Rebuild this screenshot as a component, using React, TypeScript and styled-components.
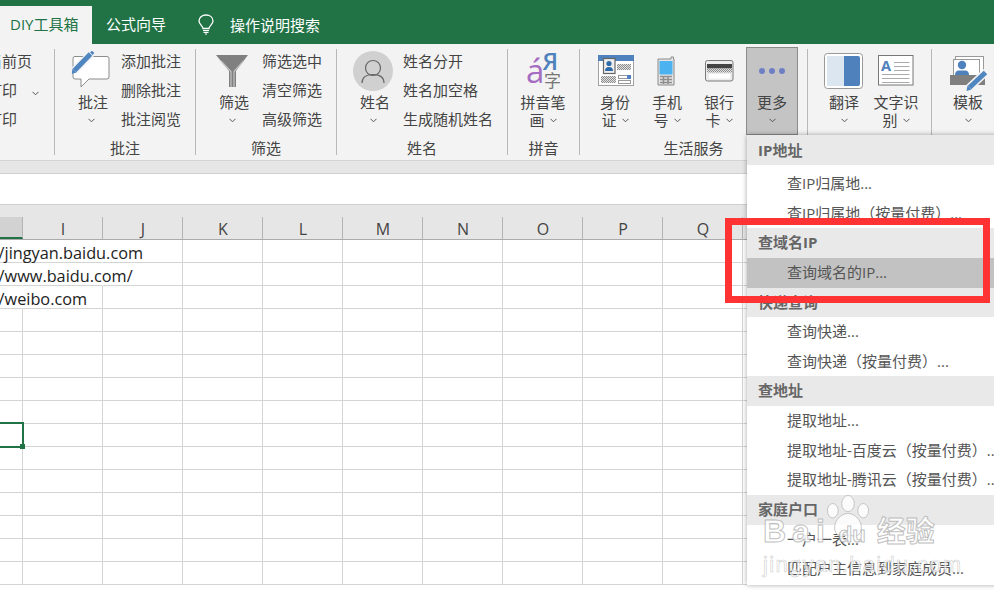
import { ReactNode } from "react";
import styled, { createGlobalStyle } from "styled-components";

const FONT = `"Open Sans", "Noto Sans CJK SC", sans-serif`;
const GREEN = "#217346";
const COLUMNS = ["H", "I", "J", "K", "L", "M", "N", "O", "P", "Q", "R", "S", "T"];
const URLS = ["https://jingyan.baidu.com", "https://www.baidu.com/", "https://weibo.com"];
const ROWS = Array.from({ length: 15 }, (_, i) => i);

const MENU = [
  { title: "IP地址", first: true, items: ["查IP归属地...", "查IP归属地（按量付费）..."] },
  { title: "查域名IP", items: ["查询域名的IP..."] },
  { title: "快递查询", items: ["查询快递...", "查询快递（按量付费）..."] },
  { title: "查地址", items: ["提取地址...", "提取地址-百度云（按量付费）...", "提取地址-腾讯云（按量付费）..."] },
  { title: "家庭户口", items: ["一户一表...", "匹配户主信息到家庭成员..."] },
];

const Chevron = () => (
  <ChevronIcon width="7" height="5" viewBox="0 0 7 5">
    <path d="M0.5 0.8 L3.5 3.8 L6.5 0.8" fill="none" stroke="#555" strokeWidth="1" />
  </ChevronIcon>
);

// speckled grey used for the fake print on the card icons
const Speckle = ({ id }: { id: string }) => (
  <defs>
    <pattern id={id} width="2" height="2" patternUnits="userSpaceOnUse">
      <rect width="2" height="2" fill="#e2e2e2" />
      <rect width="1" height="1" fill="#8c8c8c" />
      <rect x="1" y="1" width="1" height="1" fill="#8c8c8c" />
    </pattern>
  </defs>
);

const CommentIcon = () => (
  <svg width="40" height="40" viewBox="0 0 40 40">
    <path d="M4 5.5 H36 Q38 5.5 38 7.5 V26 Q38 28 36 28 H18 L10 36 V28 H4 Q2 28 2 26 V7.5 Q2 5.5 4 5.5 Z" fill="#fff" stroke="#8c8c8c" strokeWidth="1" />
    <path d="M3 20 L20 3" stroke="#f3f3f3" strokeWidth="8" />
    <path d="M3.5 19.5 L19.5 3" stroke="#4f86c0" strokeWidth="5" />
    <path d="M0.8 23 L1.5 17.5 L5.5 21.5 Z" fill="#4f86c0" />
    <path d="M20 0.5 L22.5 3" stroke="#4f86c0" strokeWidth="2.5" />
  </svg>
);

const FunnelIcon = () => (
  <svg width="40" height="40" viewBox="0 0 40 40">
    <path d="M4 4 H36 L24 20 V36 H17 V20 Z" fill="#808080" />
    <path d="M9 10 L19 20.5 V36 M31.5 10 L22 20.5 V36" fill="none" stroke="#c4c4c4" strokeWidth="1.2" />
  </svg>
);

const AvatarIcon = () => (
  <svg width="40" height="40" viewBox="0 0 40 40">
    <circle cx="20" cy="20" r="20" fill="#d0d0d0" />
    <circle cx="20" cy="17" r="7.5" fill="none" stroke="#666" strokeWidth="1.2" />
    <path d="M9 32 C9 26 14 23.5 20 23.5 S31 26 31 32" fill="none" stroke="#666" strokeWidth="1.2" />
  </svg>
);

const PinyinIcon = () => (
  <svg width="40" height="40" viewBox="0 0 40 40">
    <text x="3" y="32" fontSize="33" fill="#a56dc2" fontFamily="Open Sans, sans-serif">á</text>
    <text x="19.5" y="19" fontSize="24" fontWeight="600" fill="#4f81bd" fontFamily="Open Sans, sans-serif">Я</text>
    <text x="21" y="36" fontSize="17" fill="#777" fontFamily="Noto Sans CJK SC, sans-serif">字</text>
  </svg>
);

const IdCardIcon = () => (
  <svg width="40" height="40" viewBox="0 0 40 40">
    <Speckle id="id-speckle" />
    <rect x="3.5" y="4.5" width="35" height="30" fill="#fff" stroke="#a0a0a0" />
    <rect x="3" y="4" width="36" height="6" fill="#4f81bd" />
    <rect x="8.5" y="7.5" width="11.5" height="15" fill="#eee" stroke="#666" strokeWidth="1.2" />
    <circle cx="14" cy="12.5" r="2.6" fill="#2f6aa8" />
    <path d="M10 20 Q10 16 14 16 T18 20 Z" fill="#2f6aa8" />
    <rect x="22" y="13" width="14" height="6" fill="url(#id-speckle)" />
    <rect x="6" y="25" width="15" height="7" fill="url(#id-speckle)" />
    <rect x="23.5" y="24.5" width="12" height="3" fill="#fff" stroke="#999" />
    <rect x="32" y="24" width="4" height="4" fill="#4f81bd" />
    <rect x="23.5" y="29.5" width="12" height="3" fill="#fff" stroke="#999" />
  </svg>
);

const PhoneIcon = () => (
  <svg width="40" height="40" viewBox="0 0 40 40">
    <path d="M24 6 H26.5 V8 H27 V34 H11 V8 H24 Z" fill="#e4e4e4" stroke="#8a8a8a" />
    <rect x="12.5" y="10" width="13" height="13.5" fill="#4db3f0" />
    <path d="M13 25.5 H25 M13 28.5 H25 M13 31.5 H25 M16.5 25 V33 M21 25 V33" stroke="#8f8f8f" strokeWidth="1.6" />
  </svg>
);

const BankCardIcon = () => (
  <svg width="40" height="40" viewBox="0 0 40 40">
    <Speckle id="card-speckle" />
    <rect x="6.5" y="9.5" width="27.5" height="20.5" rx="2" fill="#ececec" stroke="#7a7a7a" />
    <rect x="8" y="13" width="25" height="4.5" fill="#444" />
    <rect x="8" y="17.5" width="25" height="4" fill="url(#card-speckle)" />
    <rect x="10" y="23" width="21" height="4.5" fill="#fff" />
  </svg>
);

const DotsIcon = () => (
  <svg width="40" height="40" viewBox="0 0 40 40">
    <circle cx="10" cy="20" r="3" fill="#6f7fc4" />
    <circle cx="20" cy="20" r="3" fill="#6f7fc4" />
    <circle cx="30" cy="20" r="3" fill="#6f7fc4" />
  </svg>
);

const TranslateIcon = () => (
  <svg width="40" height="40" viewBox="0 0 40 40">
    <rect x="0.5" y="2.5" width="38" height="35" rx="3" fill="#fff" stroke="#999" />
    <rect x="3" y="5" width="17" height="30" fill="#dce6f1" />
    <path d="M20 5 H34 Q36 5 36 7 V33 Q36 35 34 35 H20 Z" fill="#4f81bd" />
  </svg>
);

const OcrIcon = () => (
  <svg width="40" height="40" viewBox="0 0 40 40">
    <rect x="2.5" y="4.5" width="34.5" height="29.5" fill="#fff" stroke="#777" />
    <text x="5" y="20" fontSize="14.5" fontWeight="700" fill="#4f81bd" fontFamily="Open Sans, sans-serif">A</text>
    <path d="M18 11.5 H33.5 M18 15.5 H33.5 M18 19.5 H33.5 M6 23.5 H33.5 M6 27.5 H33.5 M6 31.5 H33.5" stroke="#aaa" strokeWidth="1" />
  </svg>
);

const TemplateIcon = () => (
  <svg width="40" height="40" viewBox="0 0 40 40">
    <rect x="7.5" y="5.5" width="28" height="20" fill="#fff" stroke="#999" />
    <rect x="5.5" y="8.5" width="26" height="16" fill="#fff" stroke="#999" />
    <circle cx="14" cy="14" r="4.2" fill="#4f81bd" />
    <path d="M7 24 Q7 19.5 11 19.5 H17 Q21 19.5 21 24 Z" fill="#4f81bd" />
    <rect x="2" y="24" width="35" height="10" fill="#7f7f7f" />
    <path d="M38 21 L21 37" stroke="#f3f3f3" strokeWidth="8" />
    <path d="M37.5 21.5 L21.5 36.5" stroke="#4f86c0" strokeWidth="5" />
    <path d="M18.5 40 L19.5 34.5 L23.5 38.5 Z" fill="#4f86c0" />
  </svg>
);

const BulbIcon = () => (
  <svg width="16" height="21" viewBox="0 0 16 21">
    <path d="M5 14.5 C5 12 1 10.5 1 7 C1 3.4 4 1 8 1 S15 3.4 15 7 C15 10.5 11 12 11 14.5 Z" fill="none" stroke="#fff" strokeWidth="1.3" />
    <path d="M5 16.5 H11 M5.5 18.3 H10.5 M7 20 H9" stroke="#fff" strokeWidth="1.2" />
  </svg>
);

function BigButton({
  icon,
  lines,
  active,
  nudge,
  width = 52,
}: {
  icon: ReactNode;
  lines: string[];
  active?: boolean;
  nudge?: boolean;
  width?: number;
}) {
  return (
    <BigButtonBox $active={active} $width={width}>
      <IconBox>{icon}</IconBox>
      <ButtonLine $nudge={nudge}>{lines[0]}</ButtonLine>
      <ButtonLine>
        {lines[1]}
        <Chevron />
      </ButtonLine>
    </BigButtonBox>
  );
}

function SmallActions({ items }: { items: string[] }) {
  return (
    <SmallColumn>
      {items.map((item) => (
        <SmallAction key={item}>{item}</SmallAction>
      ))}
    </SmallColumn>
  );
}

function Group({ label, children, width, pad, last }: { label: string; children: ReactNode; width: number; pad: number; last?: boolean }) {
  return (
    <GroupBox $width={width} $last={last}>
      <GroupTools $pad={pad}>{children}</GroupTools>
      <GroupLabel>{label}</GroupLabel>
    </GroupBox>
  );
}

export default function App() {
  return (
    <Page>
      <GlobalStyle />
      <TabBar>
        <ActiveTab>DIY工具箱</ActiveTab>
        <Tab>公式向导</Tab>
        <SearchTab>
          <BulbIcon />
          操作说明搜索
        </SearchTab>
      </TabBar>

      <Ribbon>
        <ClippedGroup>
          <ClippedColumn>
            <SmallAction>当前页</SmallAction>
            <SmallAction>
              打印
              <PrintChevron>
                <Chevron />
              </PrintChevron>
            </SmallAction>
            <SmallAction>打印</SmallAction>
          </ClippedColumn>
        </ClippedGroup>

        <Group width={141} label="批注" pad={10}>
          <BigButton icon={<CommentIcon />} lines={["批注"]} nudge />
          <SmallActions items={["添加批注", "删除批注", "批注阅览"]} />
        </Group>
        <Group width={141} label="筛选" pad={10}>
          <BigButton icon={<FunnelIcon />} lines={["筛选"]} nudge />
          <SmallActions items={["筛选选中", "清空筛选", "高级筛选"]} />
        </Group>
        <Group width={171} label="姓名" pad={10}>
          <BigButton icon={<AvatarIcon />} lines={["姓名"]} nudge />
          <SmallActions items={["姓名分开", "姓名加空格", "生成随机姓名"]} />
        </Group>
        <Group width={72} label="拼音" pad={5}>
          <BigButton icon={<PinyinIcon />} lines={["拼音笔", "画"]} width={60} />
        </Group>
        <Group width={228} label="生活服务" pad={9}>
          <BigButton icon={<IdCardIcon />} lines={["身份", "证"]} />
          <BigButton icon={<PhoneIcon />} lines={["手机", "号"]} />
          <BigButton icon={<BankCardIcon />} lines={["银行", "卡"]} />
          <BigButton icon={<DotsIcon />} lines={["更多"]} active />
        </Group>
        <Group width={124} label="" pad={10}>
          <BigButton icon={<TranslateIcon />} lines={["翻译"]} />
          <BigButton icon={<OcrIcon />} lines={["文字识", "别"]} />
        </Group>
        <Group width={62} label="" pad={10} last>
          <BigButton icon={<TemplateIcon />} lines={["模板"]} />
        </Group>
      </Ribbon>

      <Band />
      <FormulaBar />

      <ColumnHeader>
        {COLUMNS.map((col, i) => (
          <ColumnCell key={col} $selected={i === 0}>
            {i > 0 && col}
          </ColumnCell>
        ))}
      </ColumnHeader>

      <Sheet>
        {ROWS.map((row) => (
          <Row key={row}>
            {COLUMNS.map((col, i) => (
              <Cell
                key={col}
                $spill={URLS[row] !== undefined && (i === 0 || (i === 1 && row < 2))}
                $selected={row === 8 && i === 0}
              >
                {i === 0 && URLS[row] && <CellText>{URLS[row]}</CellText>}
              </Cell>
            ))}
          </Row>
        ))}
      </Sheet>

      <Menu>
        {MENU.map((section) => (
          <section key={section.title}>
            <MenuTitle $first={section.first}>{section.title}</MenuTitle>
            {section.items.map((item) => (
              <MenuItem key={item} $hover={item === "查询域名的IP..."}>
                {item}
              </MenuItem>
            ))}
          </section>
        ))}
      </Menu>

      <RedFrame />

      <Watermark>
        <Paw width="52" height="50" viewBox="0 0 58 48">
          <ellipse cx="29" cy="9" rx="7" ry="9" />
          <ellipse cx="12" cy="17" rx="6" ry="8" />
          <ellipse cx="46" cy="17" rx="6" ry="8" />
          <path d="M29 20 C38 20 47 31 43 41 C39 48 32 44 29 44 C26 44 19 48 15 41 C11 31 20 20 29 20 Z" />
        </Paw>
        <WatermarkBrand>
          Bai<WatermarkDu>du</WatermarkDu>
          <WatermarkCn>经验</WatermarkCn>
        </WatermarkBrand>
        <WatermarkUrl>jingyan.baidu.com</WatermarkUrl>
      </Watermark>
    </Page>
  );
}

const GlobalStyle = createGlobalStyle`
  html, body {
    margin: 0;
    padding: 0;
    overflow: hidden;
    background: #fff;
  }
  * {
    box-sizing: border-box;
  }
`;

const Page = styled.div`
  position: relative;
  width: 994px;
  height: 597px;
  overflow: hidden;
  font-family: ${FONT};
  font-size: 15px;
  color: #444;
`;

const TabBar = styled.div`
  display: flex;
  align-items: flex-end;
  height: 44px;
  background: ${GREEN};
`;

const ActiveTab = styled.div`
  width: 92px;
  height: 38px;
  padding: 8px 0 0 10px;
  line-height: 20px;
  font-size: 15px;
  white-space: nowrap;
  background: #f3f3f3;
  color: ${GREEN};
`;

const Tab = styled.div`
  width: 92px;
  height: 38px;
  padding: 8px 0 0 14px;
  line-height: 20px;
  color: #fff;
`;

const SearchTab = styled(Tab)`
  display: flex;
  align-items: center;
  gap: 16px;
  width: auto;
  height: 44px;
  padding: 5px 0 0 14px;
`;

const Ribbon = styled.div`
  display: flex;
  height: 117px;
  overflow: hidden;
  background: #f3f3f3;
  border-bottom: 1px solid #d4d4d4;
`;

const ClippedGroup = styled.div`
  width: 55px;
  height: 106px;
  margin-top: 5px;
  border-right: 1px solid #b8b8b8;
`;

const ClippedColumn = styled.div`
  display: flex;
  flex-direction: column;
  gap: 9px;
  margin: 2px 0 0 -13px;
`;

const PrintChevron = styled.span`
  margin-left: 15px;
`;

const GroupBox = styled.div<{ $width: number; $last?: boolean }>`
  flex: none;
  width: ${(p) => p.$width}px;
  height: 106px;
  margin-top: 5px;
  border-right: ${(p) => (p.$last ? "none" : "1px solid #b8b8b8")};
`;

const GroupTools = styled.div<{ $pad: number }>`
  display: flex;
  height: 89px;
  padding-left: ${(p) => p.$pad}px;
`;

const GroupLabel = styled.div`
  height: 17px;
  line-height: 20px;
  text-align: center;
`;

const BigButtonBox = styled.div<{ $active?: boolean; $width: number }>`
  flex: none;
  display: flex;
  flex-direction: column;
  align-items: center;
  width: ${(p) => p.$width}px;
  height: ${(p) => (p.$active ? "88px" : "auto")};
  margin-top: ${(p) => (p.$active ? "-2px" : "0")};
  margin-left: ${(p) => (p.$active ? "1px" : "0")};
  padding-top: ${(p) => (p.$active ? "1px" : "0")};
  background: ${(p) => (p.$active ? "#c4c4c4" : "transparent")};
  border: ${(p) => (p.$active ? "1px solid #8a8a8a" : "none")};
`;

const IconBox = styled.div`
  display: flex;
  align-items: center;
  justify-content: center;
  width: 40px;
  height: 44px;
`;

const ButtonLine = styled.div<{ $nudge?: boolean }>`
  display: flex;
  align-items: center;
  justify-content: center;
  gap: 5px;
  height: 18px;
  padding-left: ${(p) => (p.$nudge ? "4px" : "0")};
  line-height: 18px;
  white-space: nowrap;
`;

const ChevronIcon = styled.svg`
  flex: none;
`;

const SmallColumn = styled.div`
  display: flex;
  flex-direction: column;
  gap: 9px;
  margin: 2px 0 0 4px;
`;

const SmallAction = styled.div`
  height: 20px;
  line-height: 20px;
  white-space: nowrap;
`;

const Band = styled.div`
  height: 13px;
  background: #e6e6e6;
  border-bottom: 1px solid #d0d0d0;
`;

const FormulaBar = styled.div`
  height: 31px;
  background: #fff;
  border-bottom: 1px solid #cfcfcf;
`;

const ColumnHeader = styled.div`
  display: grid;
  grid-template-columns: 23px repeat(12, 80px);
  align-items: end;
  height: 35px;
  background: #e6e6e6;
  border-bottom: 1px solid #ababab;
`;

const ColumnCell = styled.div<{ $selected?: boolean }>`
  height: 22px;
  padding-left: 1px;
  line-height: 24px;
  font-size: 16px;
  text-align: center;
  color: #444;
  background: ${(p) => (p.$selected ? "#d2d2d2" : "transparent")};
  border-right: 1px solid #b4b4b4;
  border-bottom: ${(p) => (p.$selected ? `2px solid ${GREEN}` : "none")};
`;

const Sheet = styled.div`
  display: flex;
  flex-direction: column;
`;

const Row = styled.div`
  display: grid;
  grid-template-columns: 23px repeat(12, 80px);
  height: 23px;
`;

const Cell = styled.div<{ $spill?: boolean; $selected?: boolean }>`
  position: relative;
  height: 23px;
  z-index: ${(p) => (p.$selected ? 1 : "auto")};
  border-bottom: 1px solid #d4d4d4;
  border-right: 1px solid ${(p) => (p.$spill ? "transparent" : "#d4d4d4")};

  ${(p) =>
    p.$selected &&
    `
    &::before {
      content: "";
      position: absolute;
      left: -3px;
      right: -2px;
      top: -2px;
      bottom: -2px;
      border: 2px solid ${GREEN};
    }
    &::after {
      content: "";
      position: absolute;
      right: -3px;
      bottom: -3px;
      width: 5px;
      height: 5px;
      background: ${GREEN};
    }
  `}
`;

const CellText = styled.span`
  position: absolute;
  left: -51px;
  top: 2px;
  z-index: 1;
  line-height: 23px;
  font-size: 16.3px;
  color: #222;
  white-space: nowrap;
`;

const Menu = styled.div`
  position: absolute;
  left: 747px;
  top: 135px;
  width: 260px;
  height: 450px;
  background: #fff;
  box-shadow: 0 0 5px rgba(0, 0, 0, 0.35);
  z-index: 2;
`;

const MenuTitle = styled.div<{ $first?: boolean }>`
  height: ${(p) => (p.$first ? "30px" : "29.65px")};
  margin-bottom: ${(p) => (p.$first ? "4px" : "0")};
  padding-left: 11px;
  line-height: ${(p) => (p.$first ? "30px" : "29.65px")};
  font-weight: 700;
  color: #666;
  background: #e9e9e9;
`;

const MenuItem = styled.div<{ $hover?: boolean }>`
  height: 29.65px;
  padding-left: 40px;
  line-height: 29.65px;
  white-space: nowrap;
  color: #555;
  background: ${(p) => (p.$hover ? "#c2c2c2" : "transparent")};
`;

const RedFrame = styled.div`
  position: absolute;
  left: 725px;
  top: 218px;
  width: 265px;
  height: 85px;
  border: 7px solid #ff3333;
  z-index: 3;
  pointer-events: none;
`;

const Watermark = styled.div`
  position: absolute;
  left: 760px;
  top: 490px;
  width: 184px;
  height: 100px;
  z-index: 4;
  pointer-events: none;
`;

const Paw = styled.svg`
  position: absolute;
  left: 62px;
  top: 2px;
  fill: rgba(255, 255, 255, 0.8);
  stroke: rgba(170, 170, 170, 0.7);
`;

const WatermarkBrand = styled.div`
  position: absolute;
  left: 3px;
  top: 19px;
  display: flex;
  align-items: baseline;
  font-family: "Liberation Sans", "Noto Sans CJK SC", sans-serif;
  font-size: 32px;
  font-weight: 700;
  letter-spacing: 6px;
  line-height: 44px;
  white-space: nowrap;
  color: rgba(255, 255, 255, 0.85);
  -webkit-text-stroke: 1px rgba(170, 170, 170, 0.75);
`;

const WatermarkDu = styled.span`
  margin-left: 8px;
  font-size: 22px;
  letter-spacing: 0;
`;

const WatermarkCn = styled.span`
  margin-left: 11px;
  font-size: 29px;
  letter-spacing: 0;
`;

const WatermarkUrl = styled.div`
  position: absolute;
  left: 3px;
  top: 61px;
  font-family: "Liberation Sans", sans-serif;
  font-size: 22px;
  letter-spacing: 1.3px;
  line-height: 28px;
  white-space: nowrap;
  color: rgba(255, 255, 255, 0.7);
  -webkit-text-stroke: 0.6px rgba(170, 170, 170, 0.6);
`;
